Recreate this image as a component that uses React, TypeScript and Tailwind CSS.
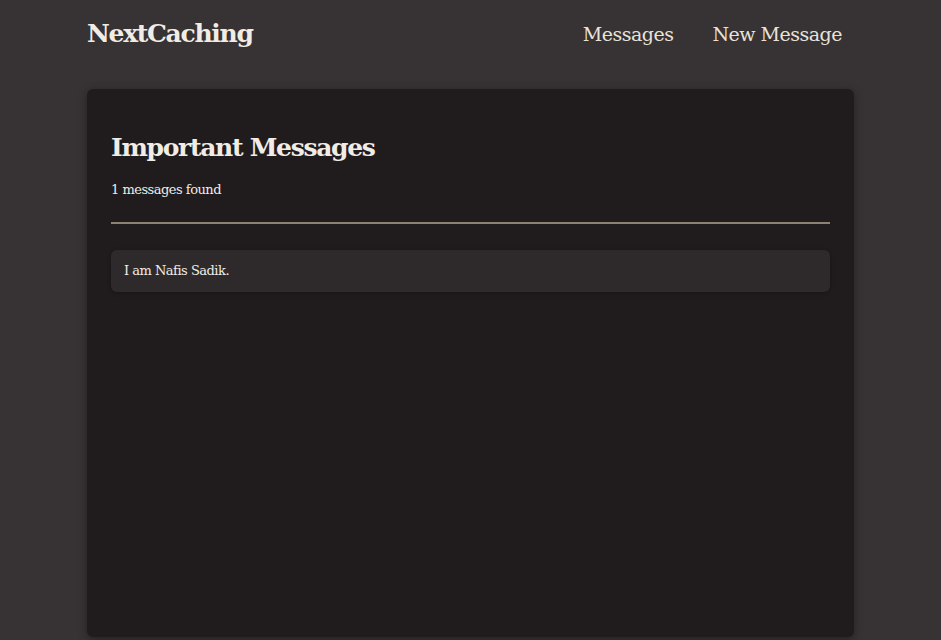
export default function App() {
    const messages = [{ id: 1, text: 'I am Nafis Sadik.' }]

    return (
        <div className="min-h-screen bg-[#373233] text-[#f1ece6] font-['DejaVu_Serif',serif]">
            {/* Header */}
            <header className="w-[767px] mx-auto h-[68px] flex items-center justify-between">
                <a href="#" className="text-[25px] font-bold tracking-[-1.3px]">NextCaching</a>
                <nav className="flex gap-[39px] pr-[12px] text-[19px] tracking-[-0.5px] text-[#e8e2dc]">
                    <a href="#">Messages</a>
                    <a href="#">New Message</a>
                </nav>
            </header>

            {/* Main card */}
            <main className="w-[767px] mx-auto mt-[21px] min-h-[548px] bg-[#201c1e] rounded-md shadow-[0_2px_8px_rgba(0,0,0,0.35)] px-6 pt-[41px] pb-6">
                <h1 className="text-[25px] font-bold leading-[36px] tracking-[-1.3px]">Important Messages</h1>
                <p className="mt-[15px] text-[13px] leading-[18px] tracking-[-0.5px]">{messages.length} messages found</p>
                <hr className="mt-[23px] border-0 h-[2px] bg-[#8a8272]" />
                <ul className="mt-[26px] flex flex-col gap-3">
                    {messages.map((m) => (
                        <li
                            key={m.id}
                            className="bg-[#2e2a2c] rounded-md shadow-[0_1px_4px_rgba(0,0,0,0.3)] px-[13px] h-[42px] flex items-center text-[13px] tracking-[-0.5px]"
                        >
                            {m.text}
                        </li>
                    ))}
                </ul>
            </main>
        </div>
    )
}
